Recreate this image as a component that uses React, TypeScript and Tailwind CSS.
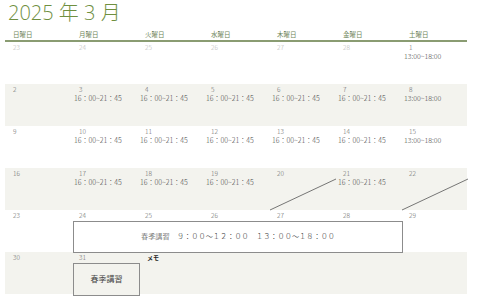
import React from 'react';

type Cell = {
  n?: number;
  prev?: boolean;
  t?: string;
  slash?: boolean;
  memo?: boolean;
};

const A = '16：00~21：45';
const B = '13:00~18:00';

const days = ['日曜日', '月曜日', '火曜日', '水曜日', '木曜日', '金曜日', '土曜日'];

const rows: Cell[][] = [
  [{ n: 23, prev: true }, { n: 24, prev: true }, { n: 25, prev: true }, { n: 26, prev: true }, { n: 27, prev: true }, { n: 28, prev: true }, { n: 1, t: B }],
  [{ n: 2 }, { n: 3, t: A }, { n: 4, t: A }, { n: 5, t: A }, { n: 6, t: A }, { n: 7, t: A }, { n: 8, t: B }],
  [{ n: 9 }, { n: 10, t: A }, { n: 11, t: A }, { n: 12, t: A }, { n: 13, t: A }, { n: 14, t: A }, { n: 15, t: B }],
  [{ n: 16 }, { n: 17, t: A }, { n: 18, t: A }, { n: 19, t: A }, { n: 20, slash: true }, { n: 21, t: A }, { n: 22, slash: true }],
  [{ n: 23 }, { n: 24 }, { n: 25 }, { n: 26 }, { n: 27 }, { n: 28 }, { n: 29 }],
  [{ n: 30 }, { n: 31 }, { memo: true }, {}, {}, {}, {}],
];

const DayCell: React.FC<{ cell: Cell }> = ({ cell }) => (
  <div className="relative h-[42px] pt-[1px]">
    {cell.n !== undefined && (
      <div className={`pl-[8px] text-[6.5px] leading-[9px] font-light ${cell.prev ? 'text-[#b8b8b8]' : 'text-[#666]'}`}>{cell.n}</div>
    )}
    {cell.memo && <div className="pl-[10px] text-[6px] leading-[9px] font-bold text-[#222]">メモ</div>}
    {cell.t && <div className="pl-[3px] text-[7px] leading-[9px] font-light text-[#444] whitespace-nowrap">{cell.t}</div>}
    {cell.slash && (
      <svg className="absolute left-0 top-0 overflow-visible" width="66" height="42">
        <line x1="1" y1="42" x2="67" y2="11" stroke="#555" strokeWidth="0.8" />
      </svg>
    )}
  </div>
);

export default function App() {
  return (
    <div className="w-[480px] h-[302px] bg-white overflow-hidden" style={{ fontFamily: '"Noto Sans CJK JP", "Noto Sans", sans-serif' }}>
      <div className="pl-[8px] h-[28px] text-[20px] leading-[26px] font-light text-[#6f8f3f] whitespace-pre" style={{ fontFamily: '"Open Sans", "Noto Sans CJK JP", sans-serif' }}>
        2025 年 3 月
      </div>
      <div className="ml-[5px] w-[462px]">
        <div className="grid grid-cols-7 h-[12px]">
          {days.map((d) => (
            <div key={d} className="pl-[8px] pt-[2px] text-[6.5px] leading-[9px] text-[#6f8559]">{d}</div>
          ))}
        </div>
        <div className="h-[1.5px] bg-[#8a9c72]" />
        <div className="relative">
          {rows.map((r, i) => (
            <div key={i} className={`grid grid-cols-7 ${i % 2 === 1 ? 'bg-[#f3f3ee]' : 'bg-white'}`}>
              {r.map((c, j) => (
                <DayCell key={j} cell={c} />
              ))}
            </div>
          ))}
          <div className="absolute left-[68px] top-[179px] w-[330px] h-[32px] border border-[#8c8c8c] bg-white flex items-center justify-center text-[7.2px] font-light text-[#333] whitespace-nowrap">
            春季講習　９：００～１２：００　１３：００～１８：００
          </div>
          <div className="absolute left-[68px] top-[221px] w-[67px] h-[33px] border border-[#8c8c8c] bg-[#f3f3ee] flex items-center justify-center text-[8px] text-[#444]">
            春季講習
          </div>
        </div>
      </div>
    </div>
  );
}
